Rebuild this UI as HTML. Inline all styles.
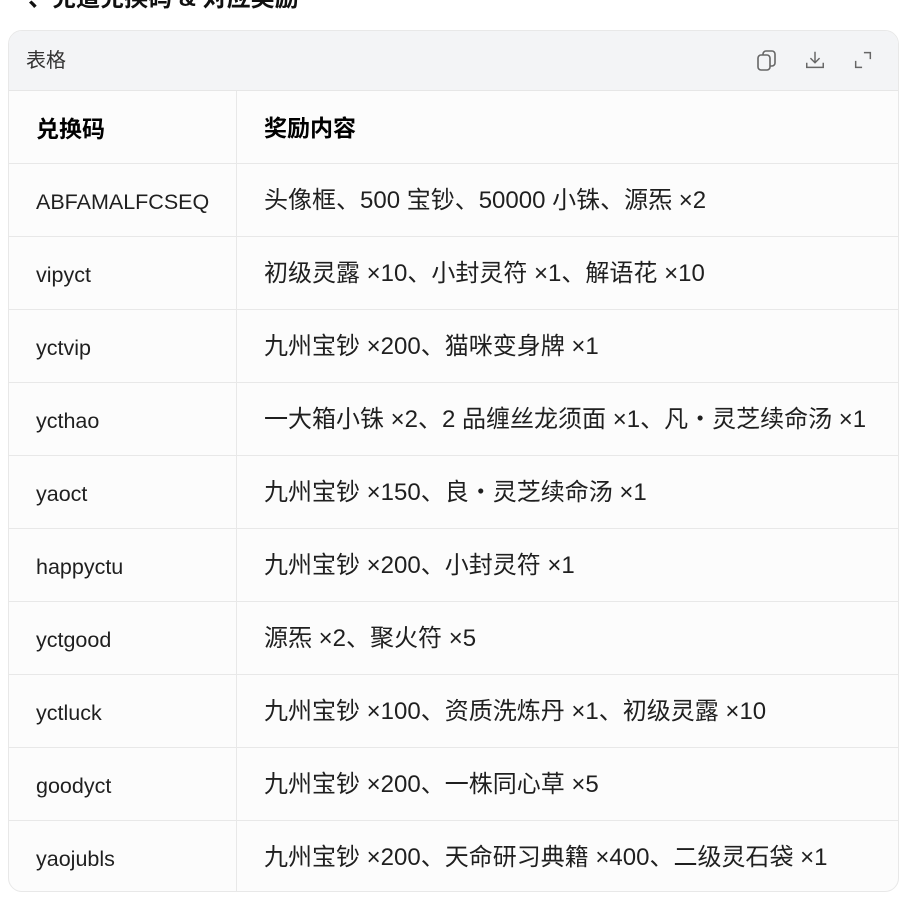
<!DOCTYPE html>
<html><head><meta charset="utf-8"><style>
body{margin:0;background:#fff;width:909px;height:918px;overflow:hidden;position:relative;font-family:"Liberation Sans","Noto Sans CJK SC",sans-serif;color:#1f1f1f}
.title{position:absolute;left:28px;top:-22px;font-size:24px;font-weight:bold;color:#111;white-space:nowrap}
.card{position:absolute;left:8px;top:30px;width:889px;height:860px;border:1px solid #e8e8e8;border-radius:14px;overflow:hidden;background:#fcfcfc}
.hd{height:59px;background:#f3f4f6;border-bottom:1px solid #e6e6e6;position:relative}
.hd span{position:absolute;left:17px;top:16px;font-size:20px;line-height:28px;color:#333}
.ic{position:absolute;top:18px}
.row{display:flex;height:72px;border-bottom:1px solid #e8e8e8;box-sizing:content-box}
.row:last-child{border-bottom:none}
.c1{width:228px;flex-shrink:0;border-right:1px solid #e8e8e8;padding-left:27px;display:flex;align-items:center;font-size:21.5px;line-height:30px;white-space:nowrap;padding-top:3px;box-sizing:border-box}
.c2{padding-left:27px;display:flex;align-items:center;font-size:24px;line-height:30px;white-space:nowrap;padding-top:2px;box-sizing:border-box}
.th .c1,.th .c2{font-size:23px;font-weight:bold;color:#000}
</style></head><body>
<div class="title">、兑道兑换码 & 对应奖励</div>
<div class="card">
<div class="hd"><span>表格</span>
<svg class="ic" style="left:746px" width="24" height="24" viewBox="0 0 24 24" fill="none" stroke="#666" stroke-width="1.6"><rect x="3" y="6" width="12" height="15" rx="3"/><path d="M8 6V5a3 3 0 0 1 3-3h6a3 3 0 0 1 3 3v9a3 3 0 0 1-3 3h-2"/></svg>
<svg class="ic" style="left:795px" width="22" height="22" viewBox="0 0 24 24" fill="none" stroke="#666" stroke-width="1.6"><path d="M12 3v12M7 10l5 5 5-5M3 15v5h18v-5"/></svg>
<svg class="ic" style="left:843px" width="22" height="22" viewBox="0 0 24 24" fill="none" stroke="#666" stroke-width="1.6"><path d="M13 4h7v7M4 13v7h7"/></svg>
</div>
<div class="row th"><div class="c1">兑换码</div><div class="c2">奖励内容</div></div>
<div class="row"><div class="c1">ABFAMALFCSEQ</div><div class="c2">头像框、500 宝钞、50000 小铢、源炁 ×2</div></div>
<div class="row"><div class="c1">vipyct</div><div class="c2">初级灵露 ×10、小封灵符 ×1、解语花 ×10</div></div>
<div class="row"><div class="c1">yctvip</div><div class="c2">九州宝钞 ×200、猫咪变身牌 ×1</div></div>
<div class="row"><div class="c1">ycthao</div><div class="c2">一大箱小铢 ×2、2 品缠丝龙须面 ×1、凡・灵芝续命汤 ×1</div></div>
<div class="row"><div class="c1">yaoct</div><div class="c2">九州宝钞 ×150、良・灵芝续命汤 ×1</div></div>
<div class="row"><div class="c1">happyctu</div><div class="c2">九州宝钞 ×200、小封灵符 ×1</div></div>
<div class="row"><div class="c1">yctgood</div><div class="c2">源炁 ×2、聚火符 ×5</div></div>
<div class="row"><div class="c1">yctluck</div><div class="c2">九州宝钞 ×100、资质洗炼丹 ×1、初级灵露 ×10</div></div>
<div class="row"><div class="c1">goodyct</div><div class="c2">九州宝钞 ×200、一株同心草 ×5</div></div>
<div class="row"><div class="c1">yaojubls</div><div class="c2">九州宝钞 ×200、天命研习典籍 ×400、二级灵石袋 ×1</div></div>
</div>
</body></html>
